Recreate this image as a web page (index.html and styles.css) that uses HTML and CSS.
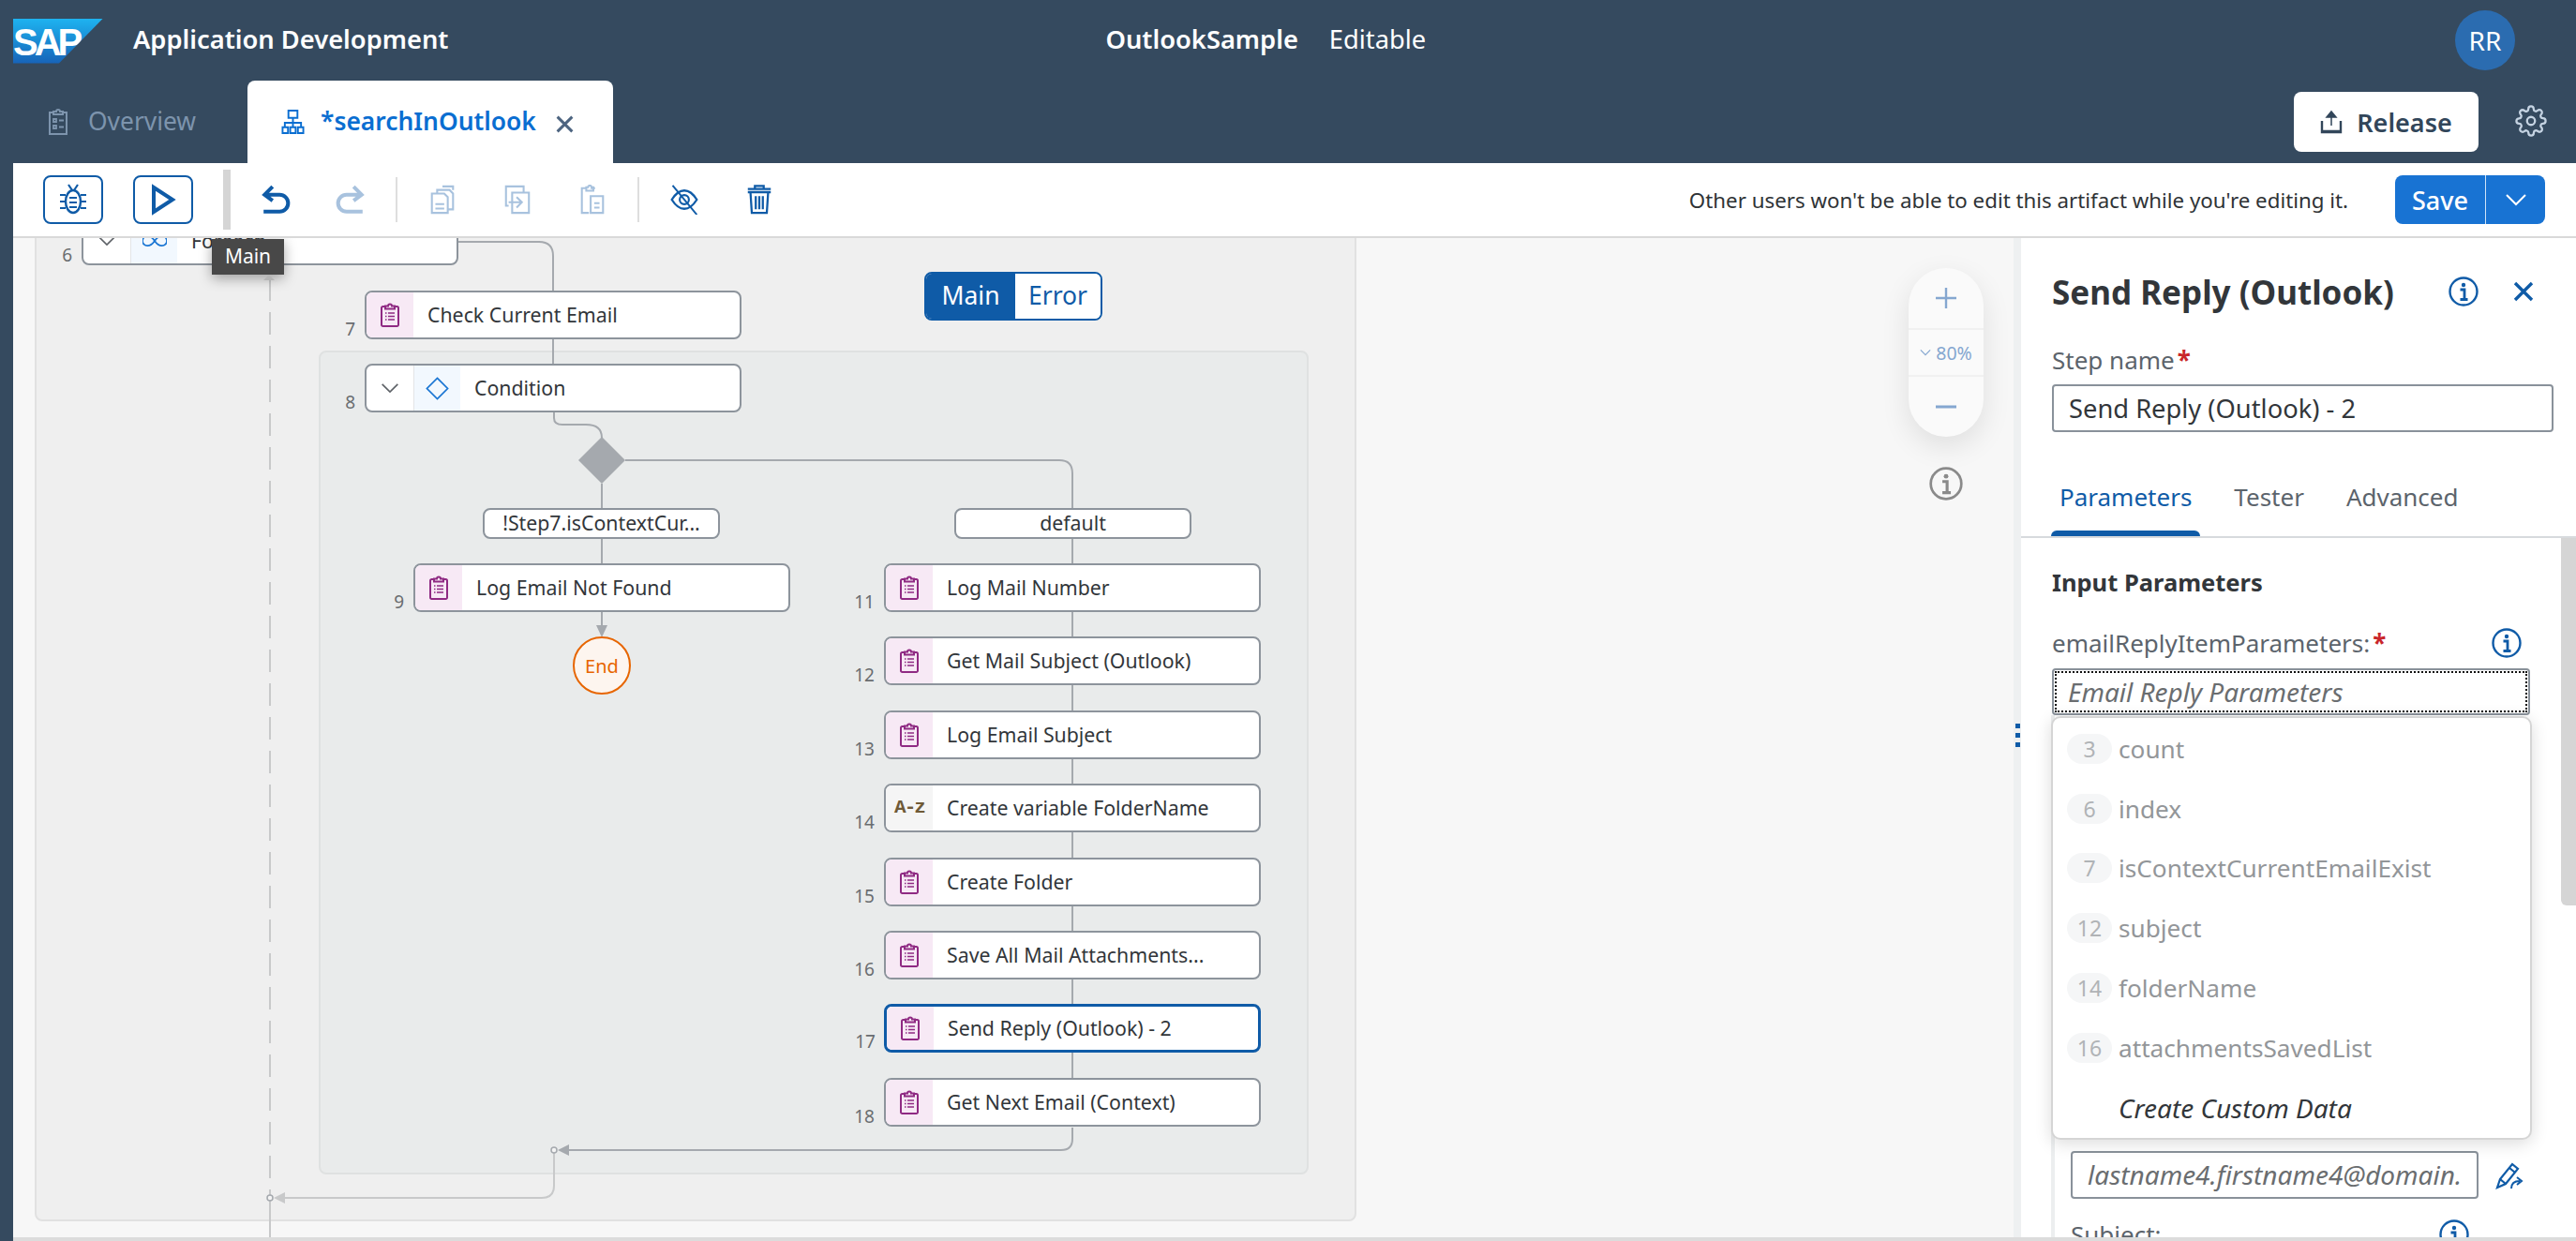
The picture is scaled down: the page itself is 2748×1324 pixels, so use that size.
FILE: index.html
```html
<!DOCTYPE html>
<html lang="en">
  <head>
    <meta charset="UTF-8" />
    <title>Application Development</title>
    <link rel="stylesheet" href="styles.css">
  </head>
  <body>
    <svg class="sprites" width="0" height="0">
      <symbol id="i-log" viewBox="0 0 20 26">
        <path d="M5 4H2.500A1.500 1.500 0 0 0 1 5.500v18A1.500 1.500 0 0 0 2.500 25h15a1.500 1.500 0 0 0 1.500-1.500v-18A1.500 1.500 0 0 0 17.500 4H15M5 6.500V3.500h3a2 2 0 0 1 4 0h3v3z" fill="none" stroke="currentColor" stroke-width="2"/>
        <path d="M8 11h7M8 14.500h7M8 18h7M5 11h1.500M5 14.500h1.500M5 18h1.500" fill="none" stroke="currentColor" stroke-width="1.600"/>
      </symbol>
      <symbol id="i-info" viewBox="0 0 32 32">
        <circle cx="16" cy="16" r="14.500" fill="none" stroke="currentColor" stroke-width="2.400"/>
        <circle cx="16" cy="9" r="2.200" fill="currentColor"/>
        <path d="M12.500 14h4.500v10M12.500 24.500h8" fill="none" stroke="currentColor" stroke-width="2.800"/>
      </symbol>
      <symbol id="i-close" viewBox="0 0 24 24">
        <path d="M3 3l18 18M21 3L3 21" fill="none" stroke="currentColor" stroke-width="3.400"/>
      </symbol>
      <symbol id="i-page" viewBox="0 0 30 34">
        <path d="M3 10h14l4 4v18H3zM9 10V6h14l4 4v18h-6M15 2h12v4" fill="none" stroke="currentColor" stroke-width="2.200"/>
        <path d="M7 22h10M7 27h10" fill="none" stroke="currentColor" stroke-width="2.200"/>
      </symbol>
    </svg>

    <header class="shell">
      <div class="shell-top">
        <div class="sap-logo"><span>SAP</span></div>
        <div class="app-title">Application Development</div>
        <div class="doc-title">
          <strong>OutlookSample</strong>
          <span>Editable</span>
        </div>
        <div class="avatar">RR</div>
      </div>
      <div class="shell-tabs">
        <div class="tab-plain">
          <svg class="tab-plain-ico" viewBox="0 0 22 28">
            <path d="M6 4H2v23h18V4h-4M6 6V3h3a2 2 0 0 1 4 0h3v3z" fill="none" stroke="currentColor" stroke-width="2"/>
            <path d="M6 11h3v3H6zM6 18h3v3H6zM12 12.500h5M12 19.500h5" fill="none" stroke="currentColor" stroke-width="1.800"/>
          </svg>
          <span>Overview</span>
        </div>
        <div class="tab-open">
          <svg class="tab-open-ico" viewBox="0 0 26 28">
            <path d="M8 1.500h10v8H8zM13 9.500V15M4 20v-5h18v5M13 15v5M1.500 20h6v6.500h-6zM10 20h6v6.500h-6zM18.500 20h6v6.500h-6z" fill="none" stroke="currentColor" stroke-width="2"/>
          </svg>
          <span class="tab-open-name">*searchInOutlook</span>
          <svg class="tab-open-x"><use href="#i-close"/></svg>
        </div>
        <button class="btn-release">
          <svg viewBox="0 0 24 26">
            <path d="M12 17V3M7 8l5-6 5 6z" fill="currentColor" stroke="currentColor" stroke-width="1.500"/>
            <path d="M2 12v12h20V12M2 23h20" fill="none" stroke="currentColor" stroke-width="2.400"/>
          </svg>
          Release
        </button>
        <svg class="gear" viewBox="0 0 24 24">
          <circle cx="12" cy="12" r="3" fill="none" stroke="currentColor" stroke-width="1.600"/>
          <path d="M19.400 15a1.650 1.650 0 0 0 .33 1.820l.06.06a2 2 0 0 1 0 2.830 2 2 0 0 1-2.830 0l-.06-.06a1.650 1.650 0 0 0-1.820-.33 1.650 1.650 0 0 0-1 1.510V21a2 2 0 0 1-2 2 2 2 0 0 1-2-2v-.09A1.650 1.650 0 0 0 9 19.400a1.650 1.650 0 0 0-1.820.33l-.06.06a2 2 0 0 1-2.830 0 2 2 0 0 1 0-2.830l.06-.06a1.650 1.650 0 0 0 .33-1.820 1.650 1.650 0 0 0-1.510-1H3a2 2 0 0 1-2-2 2 2 0 0 1 2-2h.09A1.650 1.650 0 0 0 4.600 9a1.650 1.650 0 0 0-.33-1.820l-.06-.06a2 2 0 0 1 0-2.830 2 2 0 0 1 2.830 0l.06.06a1.650 1.650 0 0 0 1.820.33H9a1.650 1.650 0 0 0 1-1.510V3a2 2 0 0 1 2-2 2 2 0 0 1 2 2v.09a1.650 1.650 0 0 0 1 1.510 1.650 1.650 0 0 0 1.820-.33l.06-.06a2 2 0 0 1 2.830 0 2 2 0 0 1 0 2.830l-.06.06a1.650 1.650 0 0 0-.33 1.820V9a1.650 1.650 0 0 0 1.510 1H21a2 2 0 0 1 2 2 2 2 0 0 1-2 2h-.09a1.650 1.650 0 0 0-1.510 1z" fill="none" stroke="currentColor" stroke-width="1.600"/>
        </svg>
      </div>
    </header>

    <div class="main">
      <div class="toolbar">
        <button class="tool-box">
          <svg viewBox="0 0 32 34">
            <ellipse cx="16" cy="19" rx="8" ry="12" fill="none" stroke="currentColor" stroke-width="2.400"/>
            <path d="M11 1l4 6M21 1l-4 6M2 12h6M2 19h6M2 26h6M24 12h6M24 19h6M24 26h6M12 15h8M12 20h8M12 25h8" fill="none" stroke="currentColor" stroke-width="2.200"/>
          </svg>
        </button>
        <button class="tool-box">
          <svg viewBox="0 0 32 34"><path d="M6 4l20 13L6 30z" fill="none" stroke="currentColor" stroke-width="4"/></svg>
        </button>
        <div class="tool-bar-sep"></div>
        <svg class="tool" viewBox="0 0 30 30">
          <path d="M12 2L4 10l8 6M4 10h15a8.500 8.500 0 0 1 0 17H3" fill="none" stroke="currentColor" stroke-width="3.800"/>
        </svg>
        <svg class="tool off" viewBox="0 0 30 30">
          <path d="M18 2l8 8-8 6M26 10H11a8.500 8.500 0 0 0 0 17h16" fill="none" stroke="currentColor" stroke-width="3.800"/>
        </svg>
        <div class="tool-sep"></div>
        <svg class="tool off"><use href="#i-page"/></svg>
        <svg class="tool off" viewBox="0 0 30 34">
          <path d="M5 24H2V2h20v6M9 9h19v23H9zM5 20h14M14 14l6 6-6 6" fill="none" stroke="currentColor" stroke-width="2.200"/>
        </svg>
        <svg class="tool off" viewBox="0 0 30 34">
          <path d="M8 4H3v28h8M18 4h-5M8 7V3h2a2 2 0 0 1 4 0h2v4zM13 13h14v19H13zM17 21h6M17 26h6" fill="none" stroke="currentColor" stroke-width="2.200"/>
        </svg>
        <div class="tool-sep"></div>
        <svg class="tool" viewBox="0 0 34 36">
          <path d="M2 18C7 10 12 7 17 7s10 3 15 11c-5 8-10 11-15 11S7 26 2 18z" fill="none" stroke="currentColor" stroke-width="2.600"/>
          <circle cx="17" cy="18" r="5.500" fill="none" stroke="currentColor" stroke-width="2.400"/>
          <path d="M3 1l29 35" fill="none" stroke="currentColor" stroke-width="2.200"/>
        </svg>
        <svg class="tool" viewBox="0 0 30 34">
          <path d="M2 5h26M2 8.500h26M10 4V1.500h10V4M5 9l1.500 23h17L25 9M11 13v15M15 13v15M19 13v15" fill="none" stroke="currentColor" stroke-width="2.400"/>
        </svg>
        <div class="tool-msg">Other users won't be able to edit this artifact while you're editing it.</div>
        <div class="btn-save">
          <span class="btn-save-main">Save</span>
          <span class="btn-save-more">
            <svg viewBox="0 0 24 14"><path d="M2 2l10 10L22 2" fill="none" stroke="currentColor" stroke-width="2"/></svg>
          </span>
        </div>
      </div>

      <div class="work">
        <section class="canvas">
          <div class="box-outer"></div>
          <div class="box-inner"></div>

          <svg class="wires" width="2134" height="1066" viewBox="14 254 2134 1066">
            <g class="wire-dim">
              <path d="M288 297V1275" stroke-dasharray="24 12"/>
              <path d="M288 1281V1320"/>
              <path d="M591 1230V1265Q591 1278 578 1278H304"/>
              <circle cx="288" cy="1278" r="3"/>
            </g>
            <polygon class="head-dim" points="304,1272 304,1284 292,1278"/>
            <g class="wire">
              <path d="M488 258H575Q590 258 590 273V310"/>
              <path d="M590 362V388"/>
              <path d="M591 440V446Q591 453 600 453H625Q642 453 642 467"/>
              <path d="M667 491H1130Q1144 491 1144 505V542"/>
              <path d="M642 516V542M642 575V602M642 653V668"/>
              <path d="M1144 575V1150"/>
              <path d="M1144 1203V1215Q1144 1227 1132 1227H607"/>
              <circle cx="591" cy="1227" r="3"/>
            </g>
            <polygon class="head" points="636,667 648,667 642,680"/>
            <polygon class="head" points="607,1221 607,1233 595,1227"/>
            <polygon class="head" points="642,466 667,491 642,516 617,491"/>
          </svg>

          <div class="node n6">
            <span class="node-num">6</span>
            <span class="node-toggle"><svg viewBox="0 0 24 14"><path d="M2 2l10 10L22 2"/></svg></span>
            <span class="node-ico blue">
              <svg class="ico-loop" viewBox="0 0 30 16"><path d="M15 8C11 2 8 2 6 2a6 6 0 0 0 0 12c2 0 5 0 9-6s7-6 9-6a6 6 0 0 1 0 12c-2 0-5 0-9-6z" fill="none" stroke="currentColor" stroke-width="2"/></svg>
            </span>
            <span class="node-text">Foreach</span>
          </div>

          <div class="tooltip">Main</div>

          <div class="node n7">
            <span class="node-num">7</span>
            <span class="node-ico pink"><svg class="ico-log"><use href="#i-log"/></svg></span>
            <span class="node-text">Check Current Email</span>
          </div>
          <div class="node n8">
            <span class="node-num">8</span>
            <span class="node-toggle"><svg viewBox="0 0 24 14"><path d="M2 2l10 10L22 2"/></svg></span>
            <span class="node-ico blue">
              <svg class="ico-cond" viewBox="0 0 26 26"><path d="M13 1.500L24.500 13 13 24.500 1.500 13z" fill="none" stroke="currentColor" stroke-width="1.800"/></svg>
            </span>
            <span class="node-text">Condition</span>
          </div>

          <div class="branch b1">!Step7.isContextCur...</div>
          <div class="branch b2">default</div>

          <div class="node n9">
            <span class="node-num">9</span>
            <span class="node-ico pink"><svg class="ico-log"><use href="#i-log"/></svg></span>
            <span class="node-text">Log Email Not Found</span>
          </div>
          <div class="end-node">End</div>

          <div class="flow-col">
            <div class="node">
              <span class="node-num">11</span>
              <span class="node-ico pink"><svg class="ico-log"><use href="#i-log"/></svg></span>
              <span class="node-text">Log Mail Number</span>
            </div>
            <div class="node">
              <span class="node-num">12</span>
              <span class="node-ico pink"><svg class="ico-log"><use href="#i-log"/></svg></span>
              <span class="node-text">Get Mail Subject (Outlook)</span>
            </div>
            <div class="node">
              <span class="node-num">13</span>
              <span class="node-ico pink"><svg class="ico-log"><use href="#i-log"/></svg></span>
              <span class="node-text">Log Email Subject</span>
            </div>
            <div class="node">
              <span class="node-num">14</span>
              <span class="node-ico grey"><b class="ico-az">A-z</b></span>
              <span class="node-text">Create variable FolderName</span>
            </div>
            <div class="node">
              <span class="node-num">15</span>
              <span class="node-ico pink"><svg class="ico-log"><use href="#i-log"/></svg></span>
              <span class="node-text">Create Folder</span>
            </div>
            <div class="node">
              <span class="node-num">16</span>
              <span class="node-ico pink"><svg class="ico-log"><use href="#i-log"/></svg></span>
              <span class="node-text">Save All Mail Attachments...</span>
            </div>
            <div class="node selected">
              <span class="node-num">17</span>
              <span class="node-ico pink"><svg class="ico-log"><use href="#i-log"/></svg></span>
              <span class="node-text">Send Reply (Outlook) - 2</span>
            </div>
            <div class="node">
              <span class="node-num">18</span>
              <span class="node-ico pink"><svg class="ico-log"><use href="#i-log"/></svg></span>
              <span class="node-text">Get Next Email (Context)</span>
            </div>
          </div>

          <div class="seg">
            <span class="seg-on">Main</span>
            <span class="seg-off">Error</span>
          </div>

          <div class="zoom-ctl">
            <div class="zoom-pill">
              <div class="zoom-btn">
                <svg viewBox="0 0 24 24"><path d="M12 1v22M1 12h22" fill="none" stroke="currentColor" stroke-width="2.400"/></svg>
              </div>
              <div class="zoom-val">
                <svg viewBox="0 0 14 8"><path d="M1 1l6 6 6-6" fill="none" stroke="currentColor" stroke-width="1.400"/></svg>
                80%
              </div>
              <div class="zoom-btn">
                <svg viewBox="0 0 24 24"><path d="M1 12h22" fill="none" stroke="currentColor" stroke-width="3"/></svg>
              </div>
            </div>
            <svg class="zoom-info"><use href="#i-info"/></svg>
          </div>
        </section>

        <div class="resizer"><i></i><i></i><i></i></div>

        <aside class="panel">
          <div class="panel-head">
            <h2>Send Reply (Outlook)</h2>
            <svg class="panel-info"><use href="#i-info"/></svg>
            <svg class="panel-x"><use href="#i-close"/></svg>
          </div>
          <div class="step-field">
            <label class="lbl">Step name<em>*</em></label>
            <div class="text-in">Send Reply (Outlook) - 2</div>
          </div>
          <nav class="panel-tabs">
            <a class="active">Parameters</a>
            <a>Tester</a>
            <a>Advanced</a>
          </nav>
          <div class="panel-body">
            <div class="scrollbar"></div>
            <h3>Input Parameters</h3>
            <div class="param-label">
              <label class="lbl">emailReplyItemParameters:<em>*</em></label>
              <svg class="param-info"><use href="#i-info"/></svg>
            </div>
            <div class="combo">
              <div class="combo-in">Email Reply Parameters</div>
              <ul class="combo-list">
                <li><span class="badge">3</span>count</li>
                <li><span class="badge">6</span>index</li>
                <li><span class="badge">7</span>isContextCurrentEmailExist</li>
                <li><span class="badge">12</span>subject</li>
                <li><span class="badge">14</span>folderName</li>
                <li><span class="badge">16</span>attachmentsSavedList</li>
                <li class="custom">Create Custom Data</li>
              </ul>
            </div>
            <div class="nested">
              <div class="nested-row">
                <div class="nested-in"><span>lastname4.firstname4@domain.com</span></div>
                <svg class="pen" viewBox="0 0 30 30">
                  <path d="M2 28l3-9L18 3l6 5L11 24zM5 19l6 5M15 7l6 5" fill="none" stroke="currentColor" stroke-width="2.200"/>
                  <path d="M17 29c0-5 3-8 9-8M23 17l5 4-5 4" fill="none" stroke="currentColor" stroke-width="2"/>
                </svg>
              </div>
              <div class="param-label sub">
                <label class="lbl">Subject:</label>
                <svg class="param-info"><use href="#i-info"/></svg>
              </div>
            </div>
          </div>
        </aside>
      </div>
      <div class="bottom-line"></div>
    </div>
  </body>
</html>
```
FILE: styles.css
```css
* {
  box-sizing: border-box;
}
html,
body {
  margin: 0;
  height: 1324px;
  overflow: hidden;
}
body {
  font-family: "Noto Sans", Arial, sans-serif;
  background-color: #354a5f;
  color: #32363a;
}
.sprites {
  position: absolute;
}
svg {
  display: block;
}
button {
  font-family: inherit;
}

/* shell header */
.shell-top {
  height: 86px;
  display: flex;
  align-items: center;
  padding-left: 14px;
  color: white;
}
.sap-logo {
  width: 96px;
  height: 48px;
  margin-top: 1px;
  background: linear-gradient(#1eb3f0, #1763b8);
  clip-path: polygon(0 0, 100% 0, 51% 100%, 0 100%);
  color: white;
  font: bold 40px/50px "Liberation Sans", sans-serif;
  letter-spacing: -4px;
}
.app-title {
  margin-left: 32px;
  padding-bottom: 4px;
  font-size: 27.300px;
  font-weight: 600;
}
.doc-title {
  margin-left: 701px;
  padding-bottom: 4px;
  display: flex;
  gap: 33px;
  font-size: 27.300px;
}
.doc-title strong {
  font-weight: 600;
}
.avatar {
  margin-left: auto;
  margin-right: 65px;
  width: 64px;
  height: 64px;
  border-radius: 50%;
  background-color: #2b6cb0;
  display: flex;
  align-items: center;
  justify-content: center;
  font-size: 28px;
}
.shell-tabs {
  height: 88px;
  display: flex;
  align-items: flex-start;
}
.tab-plain {
  width: 264px;
  height: 88px;
  padding: 25px 0 0 51px;
  display: flex;
  gap: 21px;
  color: #7d94ad;
  font-size: 26.400px;
}
.tab-plain-ico {
  width: 22px;
  height: 30px;
  margin-top: 4px;
}
.tab-open {
  width: 390px;
  height: 88px;
  background: white;
  border-radius: 8px 8px 0 0;
  padding: 25px 0 0 36px;
  display: flex;
  color: #0a6ed1;
}
.tab-open-ico {
  width: 25px;
  height: 28px;
  margin-top: 5px;
}
.tab-open-name {
  margin-left: 17px;
  font-size: 26.400px;
  font-weight: 600;
}
.tab-open-x {
  width: 21px;
  height: 21px;
  margin: 11px 0 0 20px;
  color: #4d6480;
}
.btn-release {
  margin: 12px 0 0 1793px;
  width: 197px;
  height: 64px;
  background: white;
  border: none;
  border-radius: 8px;
  display: flex;
  align-items: center;
  justify-content: center;
  gap: 15px;
  color: #32465a;
  font-size: 27px;
  font-weight: 600;
}
.btn-release svg {
  width: 24px;
  height: 26px;
}
.gear {
  width: 34px;
  height: 34px;
  margin: 26px 0 0 39px;
  color: #c5d3e2;
}

/* toolbar */
.main {
  margin-left: 14px;
}
.toolbar {
  height: 80px;
  background: white;
  border-bottom: 2px solid #d9d9d9;
  padding: 0 33px 0 32px;
  display: flex;
  align-items: center;
  color: #0f5ba7;
  position: relative;
  z-index: 3;
}
.tool-box {
  width: 64px;
  height: 52px;
  background: white;
  border: 2px solid #0f5ba7;
  border-radius: 8px;
  margin-right: 32px;
  padding: 0;
  display: flex;
  align-items: center;
  justify-content: center;
  color: #0f5ba7;
}
.tool-box svg {
  width: 32px;
  height: 34px;
}
.tool-bar-sep {
  width: 8px;
  height: 64px;
  background-color: #d5d5d5;
  margin-right: 28px;
}
.tool {
  width: 40px;
  height: 32px;
  margin-right: 40px;
}
.tool.off {
  color: #a8c2de;
}
.tool-sep {
  width: 2px;
  height: 48px;
  background-color: #dedede;
  margin: 0 28px 0 -12px;
}
.tool-msg {
  margin-left: auto;
  font-size: 22.300px;
  color: #2f3336;
}
.btn-save {
  margin-left: 50px;
  width: 160px;
  height: 52px;
  border-radius: 8px;
  background-color: #1873d3;
  color: white;
  display: flex;
  font-size: 27px;
  font-weight: 500;
}
.btn-save-main {
  width: 97px;
  display: flex;
  align-items: center;
  justify-content: center;
  border-right: 1px solid #cfe3f7;
}
.btn-save-more {
  flex: 1;
  display: flex;
  align-items: center;
  justify-content: center;
}
.btn-save-more svg {
  width: 24px;
  height: 14px;
}

/* work area */
.work {
  height: 1066px;
  display: flex;
}
.bottom-line {
  height: 4px;
  background-color: #dcdcdc;
}
.canvas {
  position: relative;
  width: 2134px;
  background-color: #f7f7f7;
  overflow: hidden;
}
.box-outer {
  position: absolute;
  left: 23px;
  top: -40px;
  width: 1410px;
  height: 1089px;
  background-color: #efefef;
  border: 2px solid #e1e1e1;
  border-radius: 8px;
}
.box-inner {
  position: absolute;
  left: 326px;
  top: 120px;
  width: 1056px;
  height: 879px;
  background-color: #e9ebeb;
  border: 2px solid #dfe1e1;
  border-radius: 8px;
}
.wires {
  position: absolute;
  left: 0;
  top: 0;
}
.wire path,
.wire-dim path {
  fill: none;
  stroke: #a5a9ae;
  stroke-width: 2;
}
.wire-dim path {
  stroke: #c8c9ca;
}
.wire circle,
.wire-dim circle {
  fill: #f4f4f4;
  stroke: #a5a9ae;
  stroke-width: 1.500;
}
.head {
  fill: #a5a9ae;
}
.head-dim {
  fill: #c8c9ca;
}

/* nodes */
.node {
  position: relative;
  width: 402px;
  height: 52px;
  flex-shrink: 0;
  background: white;
  border: 2px solid #8d949c;
  border-radius: 8px;
  display: flex;
  align-items: stretch;
  font-size: 21.300px;
  line-height: 48px;
}
.n6,
.n7,
.n8,
.n9 {
  position: absolute;
}
.n6 {
  left: 73px;
  top: -23px;
}
.n7 {
  left: 375px;
  top: 56px;
}
.n8 {
  left: 375px;
  top: 134px;
}
.n9 {
  left: 427px;
  top: 347px;
}
.flow-col {
  position: absolute;
  left: 929px;
  top: 347px;
  display: flex;
  flex-direction: column;
  gap: 26.400px;
}
.node-num {
  position: absolute;
  right: 100%;
  bottom: -5px;
  margin-right: 12px;
  font-size: 19px;
  line-height: 28px;
  color: #6a6d70;
}
.node-toggle {
  width: 50px;
  display: flex;
  align-items: center;
  justify-content: center;
}
.node-toggle svg {
  width: 20px;
  height: 12px;
  fill: none;
  stroke: #5f6368;
  stroke-width: 2;
}
.node-ico {
  width: 50px;
  display: flex;
  align-items: center;
  justify-content: center;
  border-radius: 6px 0 0 6px;
}
.node-toggle + .node-ico {
  border-radius: 0;
  border-left: 1px solid #e3e5e7;
}
.node-ico.pink {
  background-color: #f7e9f5;
  color: #8f2a83;
}
.node-ico.blue {
  background-color: #f2f8fe;
  color: #1b76d3;
}
.node-ico.grey {
  background-color: #f5f5f5;
}
.ico-log {
  width: 20px;
  height: 26px;
}
.ico-cond {
  width: 25px;
  height: 25px;
}
.ico-loop {
  width: 26px;
  height: 16px;
}
.ico-az {
  color: #6f5a37;
  font: bold 21px/48px "Liberation Mono", monospace;
  letter-spacing: -2px;
}
.node-text {
  padding-left: 15px;
  white-space: nowrap;
  color: #32363a;
}
.node.selected {
  border: 3px solid #0f5ba7;
  line-height: 46px;
}
.branch {
  position: absolute;
  top: 288px;
  width: 253px;
  height: 33px;
  background: white;
  border: 2px solid #8d949c;
  border-radius: 8px;
  text-align: center;
  font-size: 21.300px;
  line-height: 28px;
}
.b1 {
  left: 501px;
}
.b2 {
  left: 1004px;
}
.end-node {
  position: absolute;
  left: 597px;
  top: 425px;
  width: 62px;
  height: 62px;
  border: 2px solid #e76500;
  border-radius: 50%;
  background-color: #fdf5ef;
  color: #e76500;
  display: flex;
  align-items: center;
  justify-content: center;
  font-size: 20px;
}
.tooltip {
  position: absolute;
  left: 212px;
  top: 1px;
  width: 77px;
  height: 38px;
  background-color: #484848;
  color: white;
  font-size: 21px;
  line-height: 36px;
  text-align: center;
  box-shadow: 0 4px 14px rgba(0, 0, 0, 0.35);
}
.tooltip::after {
  content: "";
  position: absolute;
  left: 55px;
  top: 100%;
  border: 6px solid transparent;
  border-top: none;
  border-bottom-color: #b5b5b5;
}
.seg {
  position: absolute;
  left: 972px;
  top: 36px;
  width: 190px;
  height: 52px;
  border: 2px solid #0f5ba7;
  border-radius: 8px;
  overflow: hidden;
  display: flex;
  font-size: 26.500px;
  line-height: 46px;
  text-align: center;
}
.seg-on {
  width: 95px;
  background-color: #0f5ba7;
  color: white;
}
.seg-off {
  flex: 1;
  background: white;
  color: #0f5ba7;
}
.zoom-ctl {
  position: absolute;
  right: 32px;
  top: 32px;
  width: 80px;
  display: flex;
  flex-direction: column;
  align-items: center;
}
.zoom-pill {
  width: 80px;
  height: 180px;
  border-radius: 40px;
  background-color: #fafafa;
  box-shadow: 0 10px 30px rgba(0, 0, 0, 0.1);
  color: #85a7d0;
  display: flex;
  flex-direction: column;
}
.zoom-btn {
  height: 64px;
  display: flex;
  align-items: center;
  justify-content: center;
}
.zoom-btn svg {
  width: 24px;
  height: 24px;
}
.zoom-val {
  height: 52px;
  border-top: 2px solid #f1f1f1;
  border-bottom: 2px solid #f1f1f1;
  display: flex;
  align-items: center;
  justify-content: center;
  gap: 5px;
  font-size: 19.500px;
}
.zoom-val svg {
  width: 12px;
  height: 8px;
}
.zoom-info {
  margin-top: 32px;
  width: 36px;
  height: 36px;
  color: #8a8a8a;
}
.resizer {
  width: 8px;
  background-color: #eef0f1;
  padding: 518px 0 0 2px;
  display: flex;
  flex-direction: column;
  gap: 5px;
}
.resizer i {
  width: 5px;
  height: 5px;
  background-color: #0f5ba7;
}

/* right panel */
.panel {
  width: 592px;
  background: white;
  display: flex;
  flex-direction: column;
  overflow: hidden;
}
.panel-head {
  height: 80px;
  padding: 38px 0 0 33px;
  display: flex;
  align-items: flex-start;
}
.panel-head h2 {
  margin: 0;
  width: 423px;
  font-size: 35px;
  line-height: 40px;
  font-weight: 700;
  white-space: nowrap;
}
.panel-info {
  width: 32px;
  height: 32px;
  margin-top: 3px;
  color: #0f5ba7;
}
.panel-x {
  width: 24px;
  height: 24px;
  margin: 7px 0 0 36px;
  color: #0f5ba7;
}
.lbl {
  font-size: 26px;
  line-height: 34px;
  color: #5c646c;
  white-space: nowrap;
}
.lbl em {
  color: #c9262b;
  font-style: normal;
  font-weight: 700;
  margin-left: 3px;
}
.step-field {
  padding: 35px 24px 0 33px;
}
.text-in {
  margin-top: 9px;
  height: 51px;
  border: 2px solid #89919a;
  border-radius: 4px;
  padding-left: 16px;
  font-size: 27.300px;
  line-height: 47px;
}
.panel-tabs {
  margin-top: 27px;
  height: 86px;
  padding-left: 32px;
  display: flex;
  gap: 27px;
  border-bottom: 2px solid #d7dadd;
  font-size: 26px;
  line-height: 84px;
  color: #5c646c;
}
.panel-tabs a {
  position: relative;
  padding: 0 9px;
}
.panel-tabs .active {
  color: #0f5ba7;
}
.panel-tabs .active::after {
  content: "";
  position: absolute;
  left: 0;
  right: 0;
  bottom: 0;
  height: 6px;
  background-color: #0f5ba7;
  border-radius: 6px 6px 0 0;
}
.panel-body {
  position: relative;
  flex: 1;
  padding: 30px 0 0 33px;
}
.scrollbar {
  position: absolute;
  right: 0;
  top: 0;
  width: 16px;
  height: 392px;
  background-color: #d5d5d5;
  border-radius: 0 0 0 6px;
}
.panel-body h3 {
  margin: 0;
  font-size: 25.500px;
  line-height: 34px;
  font-weight: 700;
}
.param-label {
  margin-top: 31px;
  width: 501px;
  display: flex;
  align-items: center;
  justify-content: space-between;
}
.param-info {
  width: 32px;
  height: 32px;
  color: #0f5ba7;
}
.combo {
  position: relative;
  margin-top: 10px;
  width: 510px;
}
.combo-in {
  height: 50px;
  border: 2px solid #89919a;
  outline: 2px dotted #111;
  outline-offset: -5px;
  border-radius: 4px;
  padding-left: 15px;
  font-size: 28px;
  font-style: italic;
  line-height: 46px;
  color: #6a6d70;
}
.combo-list {
  position: absolute;
  left: -1px;
  top: 51px;
  z-index: 2;
  width: 513px;
  height: 452px;
  margin: 0;
  padding: 1px 0 0 15px;
  list-style: none;
  background: white;
  border: 2px solid #d5d5d5;
  border-radius: 10px;
  box-shadow: 0 4px 18px rgba(0, 0, 0, 0.14);
}
.combo-list li {
  height: 63.800px;
  display: flex;
  align-items: center;
  gap: 7px;
  font-size: 26.200px;
  color: #939699;
}
.combo-list .custom {
  padding-left: 55px;
  font-size: 28px;
  font-style: italic;
  color: #32363a;
}
.badge {
  width: 48px;
  height: 32px;
  border-radius: 16px;
  background-color: #f5f6f7;
  color: #b0b3b6;
  font-size: 23px;
  line-height: 32px;
  text-align: center;
}
.nested {
  margin-left: -1px;
  padding: 465px 0 0 17px;
  border-left: 4px solid #eceeef;
}
.nested-row {
  display: flex;
  align-items: center;
}
.nested-in {
  width: 435px;
  height: 51px;
  border: 2px solid #89919a;
  border-radius: 4px;
  padding: 0 16px;
  font-size: 28px;
  font-style: italic;
  line-height: 46px;
  color: #6a6d70;
  white-space: nowrap;
}
.nested-in span {
  display: block;
  overflow: hidden;
}
.pen {
  width: 30px;
  height: 30px;
  margin-left: 18px;
  color: #0f5ba7;
}
.param-label.sub {
  margin-top: 21px;
  width: 425px;
}
```
